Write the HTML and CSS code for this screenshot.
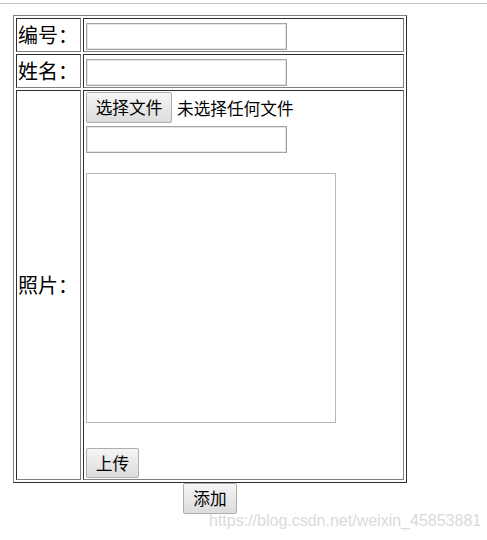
FILE: index.html
```html
<!DOCTYPE html>
<html lang="zh-CN">
<head>
<meta charset="utf-8">
<title>添加</title>
<link rel="stylesheet" href="styles.css">
</head>
<body>
<div class="topline"></div>
<div class="page">
  <table class="form">
    <tr>
      <td class="label">编号：</td>
      <td class="field"><input class="text" type="text"></td>
    </tr>
    <tr>
      <td class="label">姓名：</td>
      <td class="field"><input class="text" type="text"></td>
    </tr>
    <tr>
      <td class="label">照片：</td>
      <td class="field">
        <div class="fileline"><button class="btn btn-file" type="button">选择文件</button><span class="nofile">未选择任何文件</span></div>
        <input class="text text-path" type="text">
        <textarea class="preview"></textarea>
        <button class="btn btn-upload" type="button">上传</button>
      </td>
    </tr>
  </table>
  <div class="actions"><button class="btn btn-add" type="button">添加</button></div>
</div>
<div class="watermark">https://blog.csdn.net/weixin_45853881</div>
</body>
</html>
```
FILE: styles.css
```css
body {
  margin: 0;
  background: #fff;
  color: #000;
  font-family: "Noto Sans CJK SC", "Noto Sans", sans-serif;
}

.topline {
  height: 1px;
  margin-top: 3px;
  background: #c3c3c3;
}

.page {
  width: 394px;
  padding: 11px 0 0 13px;
}

.form {
  border-collapse: separate;
  border-spacing: 2px;
  border: 1px solid;
  border-color: #808080 #2e2e2e #2e2e2e #808080;
}

.form td {
  border: 1px solid;
  border-color: #2e2e2e #808080 #808080 #2e2e2e;
  padding: 1px;
}

.label {
  width: 61px;
  font-size: 20px;
  line-height: 30px;
  vertical-align: middle;
  white-space: nowrap;
}

.field {
  width: 318px;
  vertical-align: top;
}

.text {
  display: block;
  box-sizing: border-box;
  width: 201px;
  height: 27px;
  margin: 3px 0 0 1px;
  padding: 0 2px;
  border: 1px solid #a3a3a3;
  box-shadow: inset 0 0 0 1px #e4e4e4;
  background: #fff;
  outline: none;
}

.fileline {
  display: flex;
  align-items: center;
  height: 31px;
  margin-left: 1px;
}

.nofile {
  margin-left: 5px;
  font-size: 16.67px;
  line-height: 20px;
  white-space: nowrap;
}

.preview {
  display: block;
  box-sizing: border-box;
  width: 250px;
  height: 250px;
  margin: 20px 0 0 1px;
  padding: 0;
  border: 1px solid #b8b8b8;
  resize: none;
  outline: none;
}

.btn {
  box-sizing: border-box;
  padding: 0;
  border: 1px solid #adadad;
  border-radius: 2px;
  background: linear-gradient(#f5f5f5, #dcdcdc);
  color: #000;
  font-family: "Noto Sans CJK SC", "Noto Sans", sans-serif;
  font-size: 16.67px;
  line-height: 1;
}

.btn-file {
  width: 86px;
  height: 31px;
}

.btn-upload {
  display: block;
  width: 53px;
  height: 30px;
  margin: 25px 0 0 1px;
}

.actions {
  display: flex;
  justify-content: center;
}

.btn-add {
  width: 54px;
  height: 31px;
}

.watermark {
  position: absolute;
  left: 209px;
  top: 512px;
  font-family: "Liberation Sans", Arial, sans-serif;
  font-size: 16px;
  line-height: 18px;
  color: #dadada;
  white-space: nowrap;
}
```
